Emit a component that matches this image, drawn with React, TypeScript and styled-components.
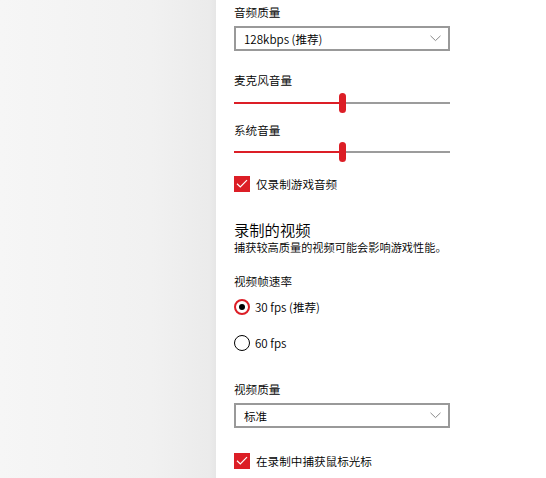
import React from 'react';
import styled, { createGlobalStyle } from 'styled-components';

const colors = {
  accent: '#dc1e26',
  text: '#000000',
  border: '#999999',
  track: '#9c9c9c',
  white: '#ffffff',
};

const GlobalStyle = createGlobalStyle`
  html, body {
    margin: 0;
    padding: 0;
    background: #ffffff;
  }
  body {
    font-family: "Noto Sans CJK SC", "Noto Sans", sans-serif;
    font-weight: 350;
    color: ${colors.text};
  }
`;

interface SpacingProps {
  $mt?: number;
}

const Window = styled.div`
  display: flex;
  width: 546px;
  height: 478px;
  overflow: hidden;
`;

const SidePanel = styled.div`
  width: 216px;
  flex-shrink: 0;
  background: linear-gradient(to right, #f6f6f6 0%, #f1f1f1 70%, #ebebeb 97%, #e6e6e6 100%);
`;

const Content = styled.div`
  display: flex;
  flex-direction: column;
  width: 216px;
  padding: 5px 0 0 18px;
`;

const Label = styled.div<SpacingProps>`
  font-size: 11.6px;
  line-height: 15px;
  height: 16px;
  margin-top: ${({ $mt }) => $mt ?? 0}px;
  white-space: nowrap;
`;

const Heading = styled.div<SpacingProps>`
  font-size: 15.3px;
  line-height: 19px;
  height: 20px;
  margin-top: ${({ $mt }) => $mt ?? 0}px;
  white-space: nowrap;
`;

const Description = styled.div`
  font-size: 11.2px;
  line-height: 15px;
  height: 16px;
  white-space: nowrap;
`;

const SelectBox = styled.div<SpacingProps>`
  display: flex;
  align-items: center;
  justify-content: space-between;
  box-sizing: border-box;
  height: 25px;
  margin-top: ${({ $mt }) => $mt ?? 0}px;
  padding: 0 7px 0 8px;
  border: 2px solid ${colors.border};
  background: ${colors.white};
  font-size: 11.6px;
`;

const SliderTrack = styled.div<SpacingProps>`
  position: relative;
  height: 20px;
  margin-top: ${({ $mt }) => $mt ?? 0}px;
`;

const TrackLine = styled.div`
  position: absolute;
  left: 0;
  right: 0;
  top: 9px;
  height: 2px;
  background: ${colors.track};
`;

const TrackFill = styled.div`
  position: absolute;
  left: 0;
  top: 9px;
  height: 2px;
  background: ${colors.accent};
`;

const Thumb = styled.div`
  position: absolute;
  top: 0;
  width: 7px;
  height: 20px;
  margin-left: -3px;
  border-radius: 4px;
  background: ${colors.accent};
`;

const OptionRow = styled.label<SpacingProps>`
  display: flex;
  align-items: center;
  height: 16px;
  margin-top: ${({ $mt }) => $mt ?? 0}px;
  font-size: 11.6px;
  white-space: nowrap;
`;

const CheckBoxMark = styled.span`
  display: flex;
  align-items: center;
  justify-content: center;
  width: 16px;
  height: 16px;
  margin-right: 6px;
  background: ${colors.accent};
`;

const RadioMark = styled.span<{ $checked: boolean }>`
  display: flex;
  align-items: center;
  justify-content: center;
  box-sizing: border-box;
  width: 16px;
  height: 16px;
  margin-right: 5px;
  border-radius: 50%;
  border: ${({ $checked }) => ($checked ? `2px solid ${colors.accent}` : '1.6px solid #000')};

  &::after {
    content: '';
    display: ${({ $checked }) => ($checked ? 'block' : 'none')};
    width: 6px;
    height: 6px;
    border-radius: 50%;
    background: #000;
  }
`;

const Chevron = () => (
  <svg width="11" height="7" viewBox="0 0 11 7">
    <polyline points="0.5,0.8 5.5,5.6 10.5,0.8" fill="none" stroke="#8a8a8a" strokeWidth="1" />
  </svg>
);

const Select: React.FC<{ value: string; mt?: number }> = ({ value, mt }) => (
  <SelectBox $mt={mt}>
    <span>{value}</span>
    <Chevron />
  </SelectBox>
);

const Slider: React.FC<{ value: number; mt?: number }> = ({ value, mt }) => (
  <SliderTrack $mt={mt}>
    <TrackLine />
    <TrackFill style={{ width: `${value}%` }} />
    <Thumb style={{ left: `${value}%` }} />
  </SliderTrack>
);

const CheckBox: React.FC<{ label: string; mt?: number }> = ({ label, mt }) => (
  <OptionRow $mt={mt}>
    <CheckBoxMark>
      <svg width="12" height="10" viewBox="0 0 12 10">
        <polyline points="1,4.8 4.3,8 11,1.2" fill="none" stroke="#fff" strokeWidth="1.2" />
      </svg>
    </CheckBoxMark>
    {label}
  </OptionRow>
);

const Radio: React.FC<{ label: string; checked: boolean; mt?: number }> = ({ label, checked, mt }) => (
  <OptionRow $mt={mt}>
    <RadioMark $checked={checked} />
    {label}
  </OptionRow>
);

const App: React.FC = () => (
  <>
    <GlobalStyle />
    <Window>
      <SidePanel />
      <Content>
        <Label>音频质量</Label>
        <Select value="128kbps (推荐)" mt={5} />

        <Label $mt={22}>麦克风音量</Label>
        <Slider value={50.2} mt={4} />

        <Label $mt={10}>系统音量</Label>
        <Slider value={50.2} mt={3} />

        <CheckBox label="仅录制游戏音频" mt={14} />

        <Heading $mt={28}>录制的视频</Heading>
        <Description>捕获较高质量的视频可能会影响游戏性能。</Description>

        <Label $mt={18}>视频帧速率</Label>
        <Radio label="30 fps (推荐)" checked mt={9} />
        <Radio label="60 fps" checked={false} mt={20} />

        <Label $mt={31}>视频质量</Label>
        <Select value="标准" mt={5} />

        <CheckBox label="在录制中捕获鼠标光标" mt={25} />
      </Content>
    </Window>
  </>
);

export default App;
